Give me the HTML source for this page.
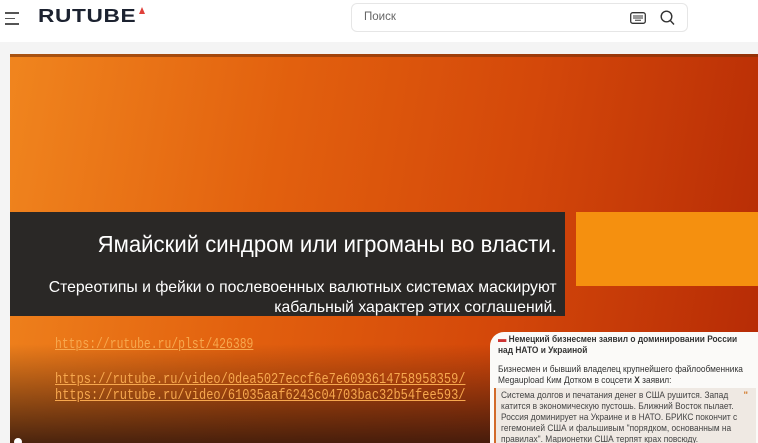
<!DOCTYPE html>
<html><head><meta charset="utf-8">
<style>
*{margin:0;padding:0;box-sizing:border-box}
html,body{overflow:hidden}
body{width:758px;height:443px;background:#f4f4f4;font-family:"Liberation Sans","Noto Sans CJK SC",sans-serif;position:relative}
.hdr{position:absolute;left:0;top:0;width:758px;height:42px;background:#fff}
.burger{position:absolute;left:5px;top:12px;width:14px}
.burger i{display:block;height:1.5px;background:#555;margin-bottom:4px}
.burger i:nth-child(2){width:10px}
.logo{position:absolute;left:38px;top:6px;font-weight:bold;font-size:18px;color:#1c2230;letter-spacing:0.5px;transform:scaleX(1.26);transform-origin:left}
.logo-tri{position:absolute;left:139px;top:7px;width:0;height:0;border-left:3px solid transparent;border-right:3px solid transparent;border-bottom:7px solid #e0403a}
.search{position:absolute;left:351px;top:3px;width:337px;height:29px;border:1px solid #e6e6e6;border-radius:6px;background:#fff}
.search span{position:absolute;left:12px;top:7px;font-size:11.5px;color:#666}
.video{position:absolute;left:10px;top:54px;width:748px;height:389px;overflow:hidden;
background:linear-gradient(100deg,#f0851e 0%,#e2600e 35%,#d4480a 65%,#b52a05 100%)}
.vig{position:absolute;left:0;top:290px;width:748px;height:100px;background:linear-gradient(180deg,rgba(60,20,5,0) 0%,rgba(45,20,12,0.85) 100%)}
.topline{position:absolute;left:0;top:0;width:748px;height:3px;background:rgba(120,50,10,0.6)}
.banner{position:absolute;left:0;top:158px;width:555px;height:104px;background:#2a2826;color:#fff}
.t1{position:absolute;right:8px;top:19px;font-size:23px;white-space:nowrap;transform:scaleX(0.963);transform-origin:right}
.t2{position:absolute;right:8px;top:66px;font-size:16px;line-height:20px;white-space:nowrap;text-align:right;transform:scaleX(0.985);transform-origin:right}
.obox{position:absolute;left:566px;top:158px;width:182px;height:74px;background:#f5900f}
.link{position:absolute;left:45px;font-family:"Liberation Mono",monospace;font-size:15px;color:#f7a84e;text-decoration:underline;white-space:nowrap;transform:scaleX(0.80);transform-origin:left}
.card{position:absolute;left:490px;top:332px;width:268px;height:111px;overflow:hidden;background:#fbfaf8;border-radius:14px 0 0 0;font-size:9.5px;color:#333;line-height:11px}
.card div{white-space:nowrap}
.sq{transform:scaleX(0.88);transform-origin:left}
.quote{position:absolute;left:4px;top:56px;width:262px;height:60px;background:#efe9e3;border-left:2px solid #d26a2a;padding:2px 5px;color:#444}
</style></head><body>
<div class="hdr">
 <div class="burger"><i></i><i></i><i></i></div>
 <div class="logo">RUTUBE</div><div class="logo-tri"></div>
 <div class="search"><span>Поиск</span>
  <svg style="position:absolute;left:278px;top:8px" width="16" height="12" viewBox="0 0 16 12"><rect x="0.7" y="0.7" width="14.6" height="10.6" rx="2" fill="none" stroke="#333" stroke-width="1.3"/><path d="M3 4h10M3 6h10M5 8.3h6" stroke="#333" stroke-width="1"/></svg>
  <svg style="position:absolute;left:308px;top:6px" width="15" height="16" viewBox="0 0 15 16"><circle cx="6.5" cy="6.5" r="5.3" fill="none" stroke="#333" stroke-width="1.4"/><path d="M10.3 10.5l3.7 4" stroke="#333" stroke-width="1.4"/></svg>
 </div>
</div>
<div class="video">
 <div class="topline"></div>
 <div class="vig"></div>
 <div class="banner">
  <div class="t1">Ямайский синдром или игроманы во власти.</div>
  <div class="t2">Стереотипы и фейки о послевоенных валютных системах маскируют<br>кабальный характер этих соглашений.</div>
 </div>
 <div class="obox"></div>
 <div class="link" style="top:282px;transform:scaleX(0.76)">https://rutube.ru/plst/426389</div>
 <div class="link" style="top:317px">https://rutube.ru/video/0dea5027eccf6e7e6093614758958359/</div>
 <div class="link" style="top:333px">https://rutube.ru/video/61035aaf6243c04703bac32b54fee593/</div>
</div>
<div class="card">
 <div class="sq" style="position:absolute;left:8px;top:2px"><b><span style="color:#c33">▬</span> Немецкий бизнесмен заявил о доминировании России<br>над НАТО и Украиной</b></div>
 <div class="sq" style="position:absolute;left:8px;top:32px">Бизнесмен и бывший владелец крупнейшего файлообменника<br>Megaupload Ким Дотком в соцсети <b>X</b> заявил:</div>
 <div class="quote"><div class="sq">Система долгов и печатания денег в США рушится. Запад<br>катится в экономическую пустошь. Ближний Восток пылает.<br>Россия доминирует на Украине и в НАТО. БРИКС покончит с<br>гегемонией США и фальшивым "порядком, основанным на<br>правилах". Марионетки США терпят крах повсюду.</div></div>
 <div style="position:absolute;right:10px;top:58px;color:#d27a2a;font-weight:bold">"</div>
</div>
<div style="position:absolute;left:14px;top:438px;width:8px;height:8px;border-radius:50%;background:#fff"></div>
</body></html>
